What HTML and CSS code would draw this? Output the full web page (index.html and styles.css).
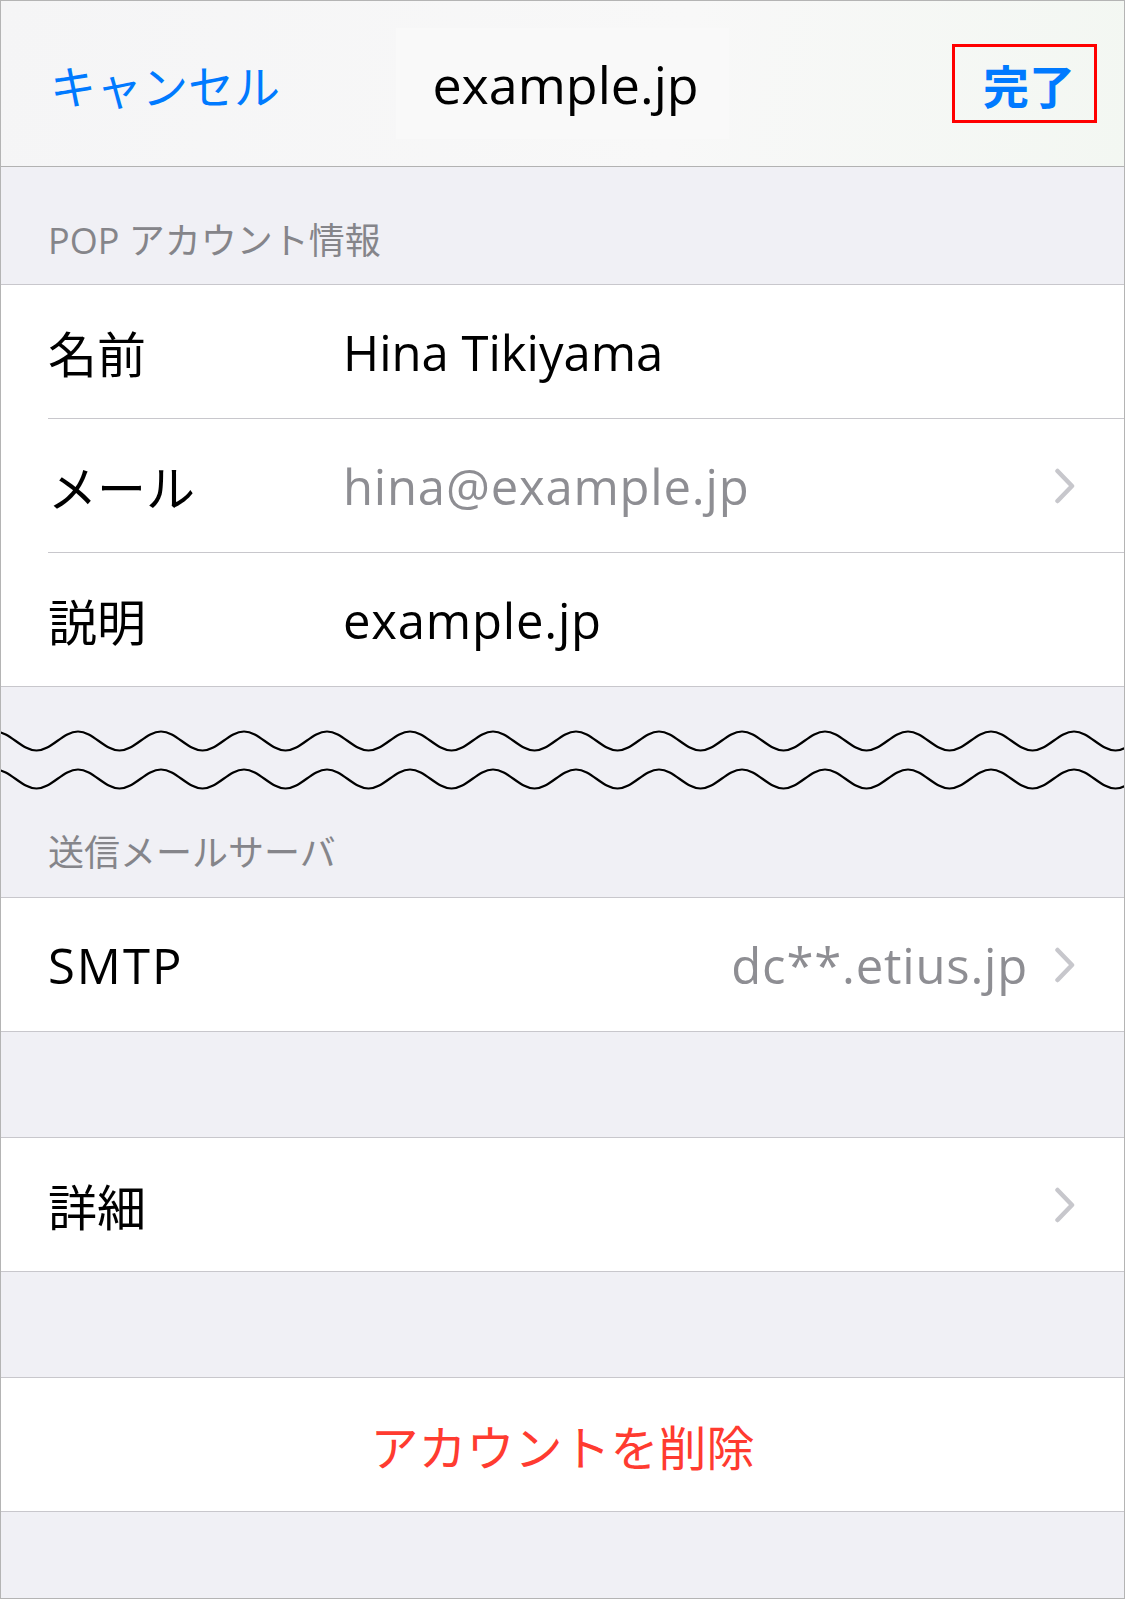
FILE: index.html
```html
<!DOCTYPE html>
<html lang="ja">
<head>
  <meta charset="UTF-8">
  <meta name="viewport" content="width=device-width, initial-scale=1.0">
  <title>example.jp</title>
  <link rel="stylesheet" href="styles.css">
</head>
<body>
  <div class="screen">
    <!-- ナビゲーションバー -->
    <header class="nav">
      <span class="nav-cancel">キャンセル</span>
      <span class="nav-title">example.jp</span>
      <span class="nav-done">完了</span>
    </header>

    <div class="section-head">POP アカウント情報</div>
    <div class="group">
      <div class="row">
        <div class="row-inner">
          <span class="label">名前</span>
          <span class="value">Hina Tikiyama</span>
        </div>
      </div>
      <div class="row">
        <div class="row-inner">
          <span class="label">メール</span>
          <span class="value value-muted value-wide">hina@example.jp</span>
          <svg class="chevron" width="22" height="36" viewBox="0 0 22 36"><path d="M3.5 3 L18 18 L3.5 33" fill="none" stroke="#c7c7cc" stroke-width="4.5" stroke-linecap="round" stroke-linejoin="round"/></svg>
        </div>
      </div>
      <div class="row">
        <div class="row-inner">
          <span class="label">説明</span>
          <span class="value value-wide">example.jp</span>
        </div>
      </div>
    </div>

    <!-- 省略の波線 -->
    <div class="cut">
      <svg width="100%" height="120" xmlns="http://www.w3.org/2000/svg">
        <defs>
          <pattern id="wave" x="-6" y="0" width="83" height="120" patternUnits="userSpaceOnUse">
            <path d="M-83 44.5 C-67.9 44.5 -56.6 63.5 -41.5 63.5 s26.4 -19 41.5 -19 s26.4 19 41.5 19 s26.4 -19 41.5 -19 s26.4 19 41.5 19 s26.4 -19 41.5 -19" fill="none" stroke="#000" stroke-width="2.2"/>
            <path d="M-83 82.5 C-67.9 82.5 -56.6 101.5 -41.5 101.5 s26.4 -19 41.5 -19 s26.4 19 41.5 19 s26.4 -19 41.5 -19 s26.4 19 41.5 19 s26.4 -19 41.5 -19" fill="none" stroke="#000" stroke-width="2.2"/>
          </pattern>
        </defs>
        <rect x="0" y="0" width="100%" height="120" fill="url(#wave)"/>
      </svg>
    </div>

    <div class="section-head section-head-cut">送信メールサーバ</div>
    <div class="group">
      <div class="row">
        <div class="row-inner">
          <span class="label label-wide">SMTP</span>
          <span class="value value-muted value-right value-wide">dc**.etius.jp</span>
          <svg class="chevron" width="22" height="36" viewBox="0 0 22 36"><path d="M3.5 3 L18 18 L3.5 33" fill="none" stroke="#c7c7cc" stroke-width="4.5" stroke-linecap="round" stroke-linejoin="round"/></svg>
        </div>
      </div>
    </div>

    <div class="spacer"></div>
    <div class="group">
      <div class="row">
        <div class="row-inner">
          <span class="label">詳細</span>
          <span class="value"></span>
          <svg class="chevron" width="22" height="36" viewBox="0 0 22 36"><path d="M3.5 3 L18 18 L3.5 33" fill="none" stroke="#c7c7cc" stroke-width="4.5" stroke-linecap="round" stroke-linejoin="round"/></svg>
        </div>
      </div>
    </div>

    <div class="spacer"></div>
    <div class="group">
      <div class="row">
        <div class="row-inner row-center">
          <span class="delete">アカウントを削除</span>
        </div>
      </div>
    </div>
  </div>
</body>
</html>
```

FILE: styles.css
```css
body {
  margin: 0;
  background: #fff;
  font-family: "Open Sans", "Noto Sans CJK JP", sans-serif;
}
.screen {
  box-sizing: border-box;
  width: 1125px;
  height: 1599px;
  border: 1px solid #b4b4b4;
  background: #f0f0f5;
  overflow: hidden;
}
.nav {
  height: 165px;
  border-bottom: 1px solid #b2b2b2;
  background: linear-gradient(100deg, #f5f5f6 0%, #f8f8f8 60%, #f3f7f2 100%);
  display: grid;
  grid-template-columns: 1fr auto 1fr;
  align-items: center;
  padding: 0 27px;
}
.nav-cancel {
  margin-left: 22px;
  font-size: 46px;
  color: #007aff;
  justify-self: start;
}
.nav-title {
  font-size: 52px;
  font-weight: 500;
  color: #000;
  background: #f9f9f9;
  padding: 20px 30px 20px 36px;
}
.nav-done {
  justify-self: end;
  box-sizing: border-box;
  height: 79px;
  display: flex;
  align-items: center;
  padding: 0 19px 0 28px;
  border: 3px solid #ff0000;
  font-size: 46px;
  font-weight: 700;
  color: #007aff;
}
.section-head {
  padding: 52px 0 21px 47px;
  font-size: 36px;
  line-height: 44px;
  color: #85858a;
}
.section-head-cut {
  padding-top: 24px;
  padding-bottom: 22px;
}
.cut {
  height: 120px;
}
.cut svg {
  display: block;
}
.group {
  background: #fff;
  border-top: 1px solid #c8c7cc;
  border-bottom: 1px solid #c8c7cc;
}
.row {
  padding-left: 47px;
}
.row-inner {
  height: 133px;
  display: flex;
  align-items: center;
  padding-right: 48px;
  border-bottom: 1px solid #c8c7cc;
}
.row:last-child .row-inner {
  height: 133px;
  border-bottom: none;
}
.label {
  width: 295px;
  flex-shrink: 0;
  font-size: 49px;
  color: #000;
}
.label-wide {
  letter-spacing: 2px;
}
.value {
  flex: 1;
  font-size: 49px;
  color: #000;
}
.value-wide {
  letter-spacing: 0.8px;
}
.value-muted {
  color: #8e8e93;
}
.value-right {
  text-align: right;
  margin-right: 26px;
}
.chevron {
  flex-shrink: 0;
}
.row-center {
  justify-content: center;
  padding-right: 47px;
}
.delete {
  font-size: 48px;
  color: #ff3b30;
}
.spacer {
  height: 105px;
}
```
